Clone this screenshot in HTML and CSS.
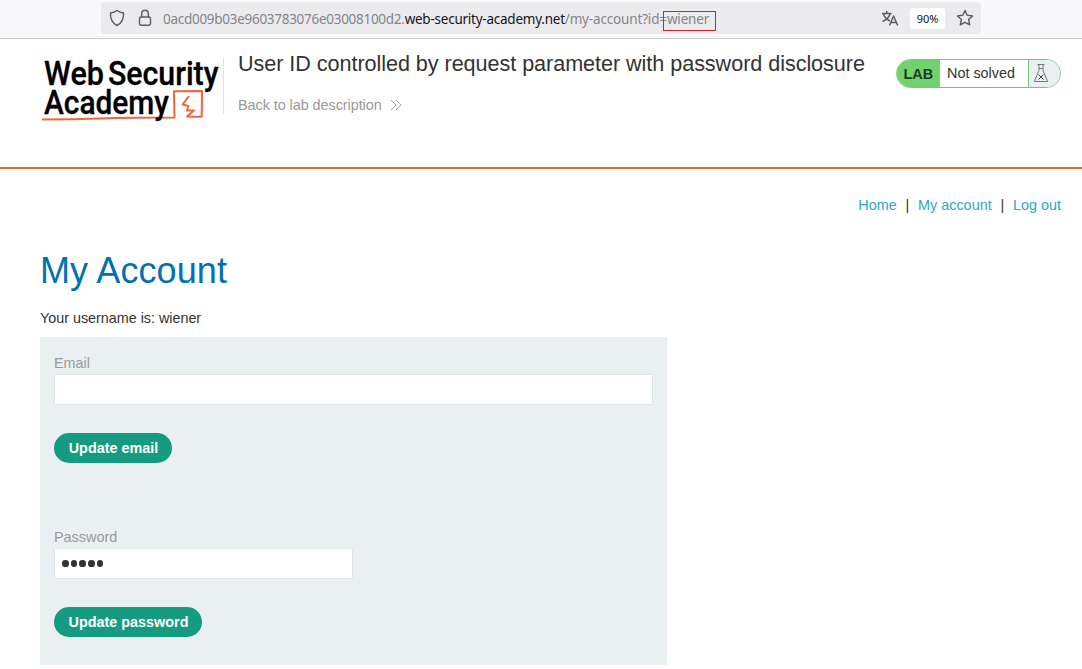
FILE: index.html
```html
<!DOCTYPE html>
<html lang="en">
<head>
<meta charset="utf-8">
<title>User ID controlled by request parameter with password disclosure</title>
<link rel="stylesheet" href="styles.css">
</head>
<body>
<div class="toolbar">
  <div class="urlbar">
    <svg class="shield" width="16" height="18" viewBox="0 0 16 18"><path d="M8 1.5C6 3 4 3.6 1.5 4C1.2 9.500 3 14 8 16.500C13 14 14.800 9.500 14.500 4C12 3.600 10 3 8 1.500Z"/></svg>
    <svg class="lock" width="14" height="18" viewBox="0 0 14 18"><rect x="1.500" y="8" width="11" height="8.200" rx="1.600"/><path d="M3.700 8V4.600a3.300 3.300 0 0 1 6.600 0V8"/></svg>
    <div class="url"><span class="sub">0acd009b03e9603783076e03008100d2.</span><span class="domain">web-security-academy.net</span><span class="path">/my-account?id=wiener</span><span class="highlight"></span></div>
    <svg class="translate" width="18" height="17" viewBox="0 0 18 17"><path d="M1 3.500H10.500M5.700 1V3.500M2.500 4C3.500 7.500 6 9.500 9 11M9 4C8 7.500 5 10 1.500 11.500M8.500 15.500L12.600 6L16.700 15.500M10 12.500H15.300"/></svg>
    <span class="zoom">90%</span>
    <svg class="star" width="18" height="18" viewBox="0 0 18 18"><path d="M9 1.500L11.200 6.300L16.500 6.900L12.600 10.500L13.700 15.900L9 13.300L4.300 15.900L5.400 10.500L1.500 6.900L6.800 6.300Z"/></svg>
  </div>
</div>
<header class="header">
  <svg class="logo" width="183" height="70" viewBox="0 0 183 70">
    <path class="logo-line" d="M2 67.500Q30 67.400 60 66.500T134.500 65.500L134 39.200L162 39L161.700 64.700L147 64.500L154 58.500L147 58.500L148.300 54L142.500 52.500L149 44"/>
    <g class="logo-text">
      <text x="4" y="32.500" textLength="60" lengthAdjust="spacingAndGlyphs">Web</text>
      <text x="68" y="32.500" textLength="110.500" lengthAdjust="spacingAndGlyphs">Security</text>
      <text x="4" y="62" textLength="125" lengthAdjust="spacingAndGlyphs">Academy</text>
    </g>
  </svg>
  <div class="title">
    <h2>User ID controlled by request parameter with password disclosure</h2>
    <a class="back">Back to lab description<svg width="12" height="12" viewBox="0 0 12 12"><path d="M1 1L6 6L1 11M6 1L11 6L6 11"/></svg></a>
  </div>
  <div class="status"><b>LAB</b><span>Not solved</span>
    <i><svg width="16" height="20" viewBox="0 0 16 20"><path d="M4.500 1.500H11.500M6 1.500V7.500L1.300 18.500H14.700L10 7.500V1.500M6 5.500H10"/><path class="cross" d="M5.500 11.500L10.500 16.500M10.500 11.500L5.500 16.500"/></svg></i>
  </div>
</header>
<main class="main">
  <nav class="nav"><a>Home</a><span>|</span><a>My account</a><span>|</span><a>Log out</a></nav>
  <h1>My Account</h1>
  <p>Your username is: wiener</p>
  <section class="panel">
    <form class="email-form"><label>Email</label><input type="email"><button type="button">Update email</button></form>
    <form><label>Password</label><div class="input short"><i></i><i></i><i></i><i></i><i></i></div><button type="button" class="wide">Update password</button></form>
  </section>
</main>
</body>
</html>
```
FILE: styles.css
```css
* { box-sizing: border-box; }
body { margin: 0; width: 1082px; height: 669px; overflow: hidden; background: #fff; color: #333332; font: 14.4px "Liberation Sans", Arial, sans-serif; }
svg { display: block; flex: none; fill: none; stroke: #5b5b66; stroke-width: 1.4; stroke-linejoin: round; }
.toolbar { height: 39px; padding: 2px 101px; background: #f9f9fb; border-bottom: 1px solid #ccc; }
.urlbar { display: flex; align-items: center; width: 880px; height: 32px; padding-left: 8px; background: #ebebed; border-radius: 4px; }
.lock { margin-left: 13px; }
.url { position: relative; display: flex; width: 547px; margin-left: 11px; padding-top: 2px; font: 13.5px/20px "Noto Sans", sans-serif; color: #85858a; white-space: nowrap; }
.sub { letter-spacing: -.28px; }
.domain { color: #15141a; letter-spacing: -.24px; }
.path { letter-spacing: -.16px; }
.highlight { position: absolute; left: 500px; top: 4px; width: 53px; height: 20px; border: 1px solid #d9202e; }
.translate { margin-left: 171px; stroke-width: 1.5; }
.zoom { width: 35px; height: 21px; margin-left: 11px; border-radius: 3px; background: #fff; color: #15141a; font: 11px/21px "Noto Sans", sans-serif; text-align: center; }
.star { margin-left: 11px; }
.header { display: flex; align-items: flex-start; height: 130px; padding: 13px 21px 0 40px; border-bottom: 2px solid #e2683c; }
.logo { overflow: visible; }
.logo-text { font: 500 33px Roboto, sans-serif; fill: #000; stroke: #000; stroke-width: .3; }
.logo-line { stroke: #f0653c; stroke-width: 2; }
.title { height: 56px; margin-top: 6px; padding-left: 14px; border-left: 1px solid #e2e2e2; flex: 1; }
.title h2 { margin: -7px 0 0; font-size: 21.6px; line-height: 26px; font-weight: 400; letter-spacing: -.05px; white-space: nowrap; }
.back { display: flex; align-items: center; margin-top: 20px; line-height: 17px; letter-spacing: -.05px; color: #999; }
.back svg { margin: 0 0 2px 8px; stroke: #aaa; stroke-width: 1; }
.status { display: flex; width: 165px; height: 29px; margin-top: 7px; border: 1px solid #70c878; border-radius: 15px; overflow: hidden; line-height: 27px; }
.status b { width: 43px; padding-left: 6.500px; background: #71d16d; color: #20372b; line-height: 29px; }
.status span { width: 89px; padding-left: 7px; border-right: 1px solid #70c878; }
.status i { flex: 1; padding: 3px 0 0 4px; background: #eaf0f2; }
.status svg { stroke: #777; stroke-width: 1; }
.status .cross { stroke: #444; stroke-width: 1; }
.main { padding: 28px 21px 0 40px; }
.nav { display: flex; justify-content: flex-end; line-height: 17px; color: #333332; }
.nav a { color: #29a7cc; }
.nav span { margin: 0 8.800px; }
h1 { margin: 36px 0 0; font-size: 36px; line-height: 41px; font-weight: 400; letter-spacing: .1px; color: #0071b0; }
p { margin: 19px 0 0; line-height: 17px; letter-spacing: -.03px; }
.panel { width: 627px; height: 328px; margin-top: 10px; padding: 18px 14px 0; background: #eaf0f2; }
form { display: flex; flex-direction: column; align-items: flex-start; }
.email-form { margin-bottom: 66px; }
label { height: 19px; line-height: 17px; color: #999; }
input, .input { width: 599px; height: 31px; padding: 0 7px; background: #fff; border: 1px solid #dfe6e8; border-radius: 1px; outline: 0; }
.short { display: flex; align-items: center; gap: 2px; width: 299px; }
.short i { width: 6.700px; height: 6.700px; border-radius: 50%; background: #333332; }
button { width: 118px; height: 30px; margin-top: 28px; padding: 0 0 0 1px; border: 0; border-radius: 15px; background: #159b7f; color: #fff; font: bold 14.4px/30px "Liberation Sans", Arial, sans-serif; white-space: nowrap; }
.wide { width: 148px; }
```
